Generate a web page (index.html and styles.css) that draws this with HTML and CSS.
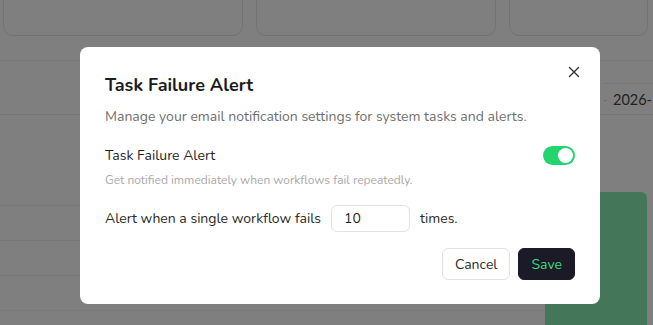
FILE: index.html
```html
<!DOCTYPE html>
<html lang="en">
<head>
    <meta charset="UTF-8">
    <meta name="viewport" content="width=device-width, initial-scale=1.0">
    <title>Task Failure Alert</title>
    <link rel="stylesheet" href="styles.css">
</head>
<body>
    <!-- Dashboard behind the dialog -->
    <div class="page">
        <div class="stat-cards">
            <div class="stat-card"></div>
            <div class="stat-card"></div>
            <div class="stat-card"></div>
        </div>

        <div class="section">
            <div class="toolbar">
                <div class="date-box"><span class="dash">-</span><span>2026-</span></div>
            </div>
            <div class="content">
                <div class="rows">
                    <div class="row"></div>
                    <div class="row"></div>
                    <div class="row"></div>
                    <div class="row"></div>
                </div>
                <div class="chart"></div>
            </div>
        </div>
    </div>

    <div class="overlay"></div>

    <!-- Dialog -->
    <div class="dialog">
        <button class="close" aria-label="Close">
            <svg width="12" height="12" viewBox="0 0 12 12"><path d="M1.5 1.5 L10.5 10.5 M10.5 1.5 L1.5 10.5" stroke="#333" stroke-width="1.4" stroke-linecap="round"/></svg>
        </button>
        <h2>Task Failure Alert</h2>
        <p class="desc">Manage your email notification settings for system tasks and alerts.</p>

        <div class="setting">
            <div class="setting-head">
                <span class="label">Task Failure Alert</span>
                <span class="switch"><span class="knob"></span></span>
            </div>
            <p class="hint">Get notified immediately when workflows fail repeatedly.</p>
        </div>

        <div class="threshold">
            <span>Alert when a single workflow fails</span>
            <input type="text" value="10">
            <span>times.</span>
        </div>

        <div class="actions">
            <button class="btn btn-outline">Cancel</button>
            <button class="btn btn-dark">Save</button>
        </div>
    </div>
</body>
</html>
```

FILE: styles.css
```css
html, body {
    height: 325px;
    overflow: hidden;
}

body {
    margin: 0;
    font-family: 'Nunito', 'Lato', sans-serif;
    background-color: #ffffff;
    color: #1f1f1f;
}

.page {
    padding: 0 6px 0 3px;
}

.stat-cards {
    display: grid;
    grid-template-columns: 239px 239px 1fr;
    gap: 14px;
    margin-top: -10px;
}

.stat-card {
    height: 44px;
    border: 1px solid #e5e5e5;
    border-radius: 10px;
    margin-right: -1px;
}

.section {
    margin: 24px -6px 0 -3px;
    border-top: 1px solid #ececec;
}

.toolbar {
    display: flex;
    justify-content: flex-end;
    padding-top: 22px;
    border-bottom: 1px solid #ececec;
}

.date-box {
    display: flex;
    align-items: center;
    gap: 6px;
    height: 30px;
    padding-right: 1px;
    font-size: 14.5px;
    color: #444;
    border-top: 1px solid #ececec;
    white-space: nowrap;
    font-family: 'Lato', sans-serif;
}

.dash {
    color: #bbb;
    font-size: 10px;
}

.content {
    display: flex;
    justify-content: space-between;
    padding-right: 6px;
}

.rows {
    flex: 1;
    padding-top: 56px;
}

.row {
    height: 34px;
    border-bottom: 1px solid #f0f0f0;
}

.chart {
    width: 102px;
    margin-top: 77px;
    height: 140px;
    background-color: #88eeb2;
    border-radius: 6px 6px 0 0;
}

.overlay {
    position: fixed;
    inset: 0;
    background-color: rgba(0, 0, 0, 0.5);
}

.dialog {
    position: fixed;
    left: 80px;
    top: 47px;
    width: 520px;
    height: 257px;
    box-sizing: border-box;
    padding: 27px 25px 0 25px;
    background-color: #ffffff;
    border-radius: 8px;
}

.close {
    position: absolute;
    right: 19px;
    top: 18px;
    width: 14px;
    height: 14px;
    padding: 0;
    border: none;
    background: none;
    display: flex;
    align-items: center;
    justify-content: center;
}

h2 {
    margin: 0;
    font-size: 18px;
    font-weight: 700;
    color: #1c1c1c;
    line-height: 22px;
}

.desc {
    margin: 11px 0 0 0;
    font-size: 14px;
    color: #6f6f6f;
    line-height: 20px;
}

.setting {
    margin-top: 19px;
}

.setting-head {
    display: flex;
    justify-content: space-between;
    align-items: center;
    height: 19px;
}

.label {
    font-size: 14px;
    color: #1f1f1f;
}

.switch {
    width: 32px;
    height: 19px;
    border-radius: 10px;
    background-color: #24d46f;
    position: relative;
}

.knob {
    position: absolute;
    right: 2px;
    top: 2px;
    width: 15px;
    height: 15px;
    border-radius: 50%;
    background-color: #ffffff;
}

.hint {
    margin: 8px 0 0 0;
    font-size: 12px;
    line-height: 15px;
    color: #a9a9a9;
}

.threshold {
    display: flex;
    align-items: center;
    gap: 10px;
    margin-top: 17px;
    font-size: 14px;
    color: #2a2a2a;
}

.threshold input {
    width: 79px;
    height: 27px;
    box-sizing: border-box;
    border: 1px solid #e2e2e2;
    border-radius: 6px;
    padding: 0 12px;
    font-family: inherit;
    font-size: 14px;
    color: #1f1f1f;
    outline: none;
}

.actions {
    display: flex;
    justify-content: flex-end;
    gap: 8px;
    margin-top: 16px;
}

.btn {
    height: 32px;
    padding: 0 12px;
    border-radius: 6px;
    font-family: inherit;
    font-size: 14px;
    cursor: pointer;
}

.btn-outline {
    background-color: #ffffff;
    border: 1px solid #e2e2e2;
    color: #2a2a2a;
}

.btn-dark {
    background-color: #1a1b26;
    border: 1px solid #1a1b26;
    color: #3ddc84;
}
```
